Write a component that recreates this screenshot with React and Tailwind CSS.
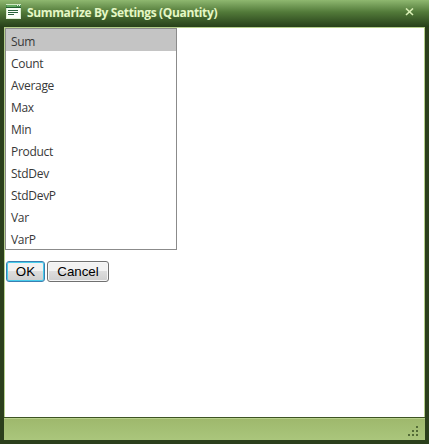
const functions = ['Sum', 'Count', 'Average', 'Max', 'Min', 'Product', 'StdDev', 'StdDevP', 'Var', 'VarP'];

function WindowIcon() {
  return (
    <svg width="16" height="16" viewBox="0 0 16 16" shapeRendering="crispEdges" className="shrink-0">
      <rect x="0" y="0" width="15" height="15" fill="#dcefd3" />
      <rect x="0" y="0" width="15" height="4" fill="#4c9152" />
      <rect x="0" y="0" width="15" height="1" fill="#cfe8c2" />
      <rect x="1" y="1" width="9" height="2" fill="#64ab60" />
      <rect x="11" y="1" width="1" height="1" fill="#e4f3df" />
      <rect x="13" y="1" width="1" height="1" fill="#e4f3df" />
      <rect x="0" y="3" width="15" height="1" fill="#24602f" />
      <rect x="1" y="4" width="13" height="10" fill="#fafff8" />
      <rect x="2" y="6" width="10" height="1" fill="#28623a" />
      <rect x="2" y="8" width="10" height="1" fill="#28623a" />
      <rect x="2" y="10" width="6" height="1" fill="#28623a" />
    </svg>
  );
}

function TitleBar() {
  return (
    <header className="flex h-[27px] shrink-0 items-start bg-linear-to-b from-[#8fb870] via-[#527a39] via-45% to-[#27401a] pr-[15px] pl-1.5">
      <div className="pt-1"><WindowIcon /></div>
      <h1 className="ml-[5px] grow pt-[5px] text-[12px] leading-4 font-bold tracking-[-0.36px] whitespace-nowrap text-[#e5f7c5]">
        Summarize By Settings (Quantity)
      </h1>
      <button aria-label="Close" className="mt-2">
        <svg width="9" height="8" viewBox="0 0 9 8" fill="none" stroke="#d9efb5" strokeWidth="1.6">
          <path d="M1 .5L8 7M8 .5L1 7" />
        </svg>
      </button>
    </header>
  );
}

function ResizeGrip() {
  return (
    <svg width="11" height="11" viewBox="0 0 11 11" fill="#536b36" shapeRendering="crispEdges">
      <path d="M8 0h2v2h-2zM4 4h2v2h-2zM8 4h2v2h-2zM0 8h2v2h-2zM4 8h2v2h-2zM8 8h2v2h-2z" />
    </svg>
  );
}

export default function App() {
  return (
    <div className="flex h-[444px] w-[429px] flex-col bg-[#2b3f1c] font-['Open_Sans','Noto_Sans',sans-serif]">
      <TitleBar />
      <div className="mr-1 ml-1 flex h-[390px] shrink-0 flex-col items-start border border-b-0 border-[#b5cf8c] bg-white">
        <ul className="h-[222px] w-[172px] overflow-hidden border border-[#8b8b8b] bg-white">
          {functions.map((name, i) => (
            <li
              key={name}
              className={`h-[22px] pl-[5px] text-[12px] leading-[25px] tracking-[-0.3px] text-[#383838] ${i === 0 ? 'bg-[#c4c4c4]' : ''}`}
            >
              {name}
            </li>
          ))}
        </ul>
        <div className="mt-[11px] ml-px flex gap-[2px] font-['Liberation_Sans',Arial,sans-serif] text-[13.33px] leading-[19px] text-black">
          <button className="h-[21px] w-[39px] rounded-[3px] border border-[#3c7fb1] bg-linear-to-b from-[#f2f2f2] from-50% via-[#dddddd] via-50% to-[#cfcfcf] inset-ring inset-ring-[#48cdec]">
            OK
          </button>
          <button className="h-[21px] w-[62px] rounded-[3px] border border-[#707070] bg-linear-to-b from-[#f2f2f2] from-50% via-[#dddddd] via-50% to-[#cfcfcf] inset-ring inset-ring-[#f7f7f7]">
            Cancel
          </button>
        </div>
      </div>
      <footer className="mx-1 flex h-[23px] shrink-0 items-end justify-end border-t border-[#3d5423] bg-linear-to-b from-[#9eb86c] to-[#aac67c] pr-[6px] pb-[3px] inset-shadow-[0_1px_0_#b9d18c]">
        <ResizeGrip />
      </footer>
    </div>
  );
}
